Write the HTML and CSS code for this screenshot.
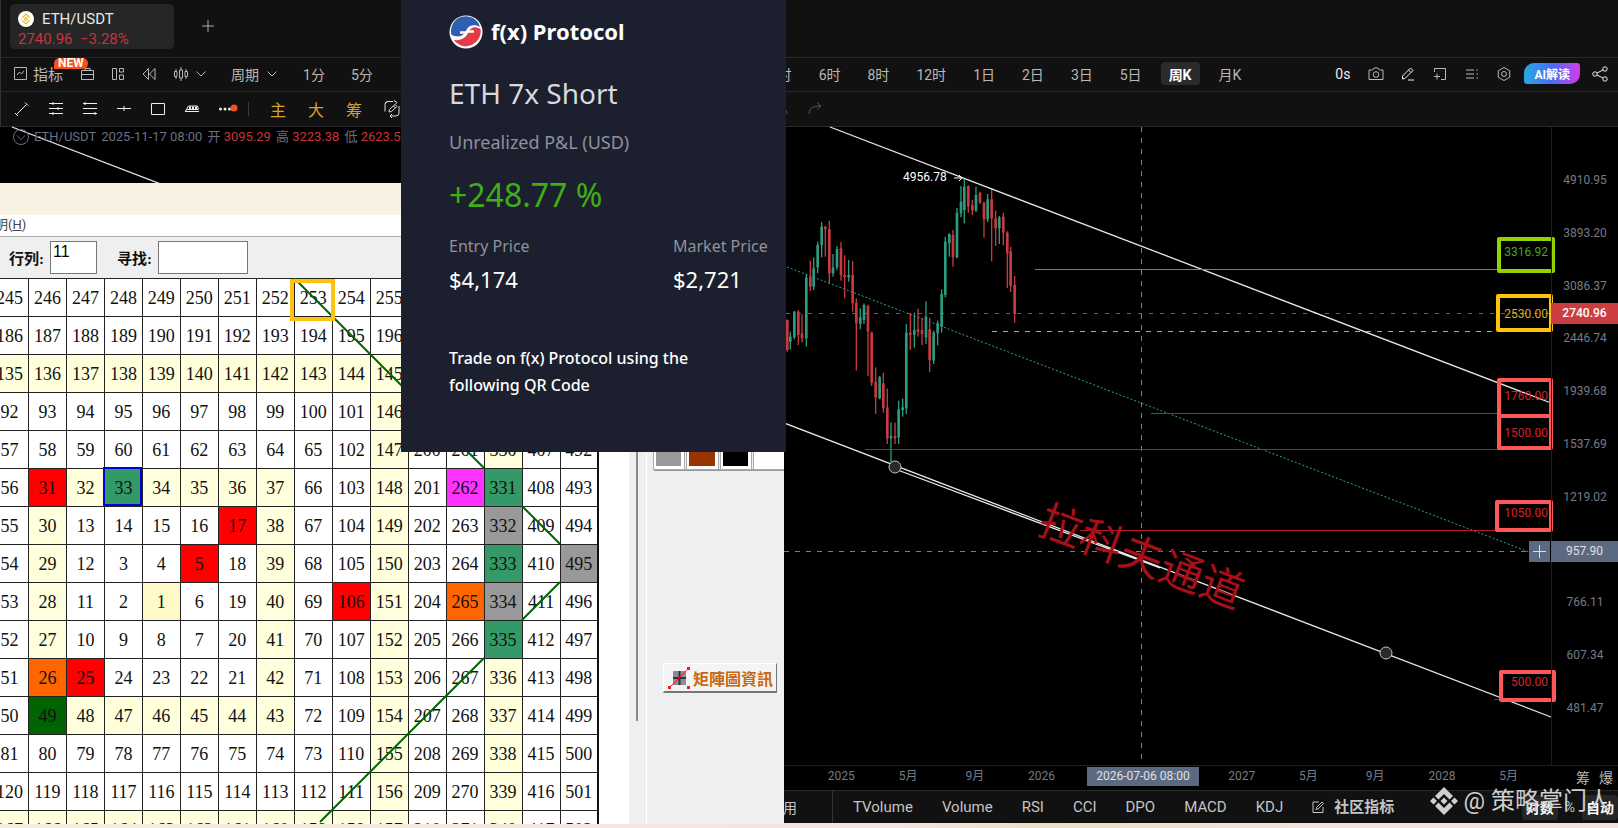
FILE: index.html
```html
<!DOCTYPE html>
<html lang="zh-CN">

<head>
    <meta charset="UTF-8">
    <meta name="viewport" content="width=device-width, initial-scale=1.0">
    <title>ETH/USDT</title>
    <link rel="stylesheet" href="styles.css">
</head>

<body>
    <!-- 行情软件 -->
    <div class="app">
        <!-- 顶部标签 -->
        <header class="tabs">
            <a class="tab" href="#">
                <span class="tab-name">
                    <svg width="16" height="16" viewBox="0 0 16 16">
                        <circle cx="8" cy="8" r="8" fill="#fff" />
                        <path d="M4.500 6.500 8 3 11.500 6.500M4.500 9.500 8 13 11.500 9.500M8 6.300 9.700 8 8 9.700 6.300 8ZM2.800 8h1M12.200 8h1" fill="none" stroke="#f3ba2f" stroke-width="1.200" />
                    </svg>
                    ETH/USDT
                </span>
                <span class="tab-price">2740.96 &nbsp;−3.28%</span>
            </a>
            <button class="tab-add" aria-label="新建">
                <svg width="12" height="12" viewBox="0 0 12 12"><path d="M6 0v12M0 6h12" stroke="#aaa" /></svg>
            </button>
        </header>

        <!-- 周期工具栏 -->
        <nav class="toolbar periods">
            <div class="tool-group">
                <button class="indicator-btn">
                    <svg width="13" height="13" viewBox="0 0 13 13"><path d="M.5.5h12v12H.5ZM3 8l2.500-3 2 2L10 4" /></svg>
                    指标
                    <span class="new-badge">NEW</span>
                </button>
                <button aria-label="模板"><svg width="13" height="13" viewBox="0 0 13 13"><path d="M.5 3.500h12v9H.5ZM4 3.500V1.500h5v2M.5 7.500h12" /></svg></button>
                <button aria-label="布局"><svg width="12" height="12" viewBox="0 0 12 12"><path d="M.5.500h4v11h-4ZM7.500.500h4v3.500h-4ZM7.500 7h4v4.500h-4Z" /></svg></button>
                <button aria-label="回放"><svg width="14" height="12" viewBox="0 0 14 12"><path d="M6.500.500v11L1 6ZM13 .500v11L7.500 6Z" /></svg></button>
                <button class="with-arrow" aria-label="K线样式">
                    <svg width="14" height="14" viewBox="0 0 14 14"><path d="M.5 4.500h2.500v5H.5ZM5.500 3H8.500v8h-3ZM11 4.500h2.500v5H11ZM2 2v2.500M2 9.500V12M7 0v3M7 11v3M12 2v2.500M12 9.500V12" /></svg>
                    <svg width="10" height="6" viewBox="0 0 10 6"><path d="m.5.500 4.500 4.500L9.500.500" /></svg>
                </button>
            </div>
            <div class="period-group">
                <button class="with-arrow">周期 <svg width="10" height="6" viewBox="0 0 10 6"><path d="m.5.500 4.500 4.500L9.500.500" /></svg></button>
                <button>1分</button>
                <button>5分</button>
            </div>
            <div class="period-group right">
                <button>4时</button>
                <button>6时</button>
                <button>8时</button>
                <button>12时</button>
                <button>1日</button>
                <button>2日</button>
                <button>3日</button>
                <button>5日</button>
                <button class="active">周K</button>
                <button>月K</button>
            </div>
            <div class="action-group">
                <button class="delay">0s</button>
                <button aria-label="截图"><svg width="16" height="16" viewBox="0 0 16 16"><path d="M1 4h3.500L6 2h4l1.500 2H15v9.500H1Z" /><circle cx="8" cy="8.500" r="2.800" /></svg></button>
                <button class="bright" aria-label="画线"><svg width="16" height="16" viewBox="0 0 16 16"><path d="M2.500 13v-3L10.500 2 13 4.500 5 12.500ZM8.500 4l2.500 2.500M8 14h6" /></svg></button>
                <button aria-label="添加"><svg width="16" height="16" viewBox="0 0 16 16"><path d="M2.500 6V2.500h11v11H9M2 10.500h6M5 7.500v6" /></svg></button>
                <button aria-label="列表"><svg width="16" height="16" viewBox="0 0 16 16"><path d="M2 4h8M2 8h8M2 12h8M12.500 4h1.500M12.500 8h1.500M12.500 12h1.500" /></svg></button>
                <button aria-label="设置"><svg width="16" height="16" viewBox="0 0 16 16"><path d="m8 1.500 5.700 3.200v6.600L8 14.500l-5.700-3.200V4.700Z" /><circle cx="8" cy="8" r="2.500" /></svg></button>
                <button class="ai-btn">AI解读</button>
                <button class="bright" aria-label="分享"><svg width="16" height="16" viewBox="0 0 16 16"><path d="m5 7 6-3M5 9l6 3" /><circle cx="3" cy="8" r="2.200" /><circle cx="13" cy="3" r="2.200" /><circle cx="13" cy="13" r="2.200" /></svg></button>
            </div>
        </nav>

        <!-- 画线工具栏 -->
        <nav class="toolbar drawing">
            <button aria-label="线段"><svg width="16" height="16" viewBox="0 0 16 16"><path d="m3 13 9.500-9.500M1 12l3 3M11 1.500l3 3" /></svg></button>
            <button aria-label="平行线"><svg width="16" height="16" viewBox="0 0 16 16"><path d="M1 2.500h14M1 7.500h14M1 12.500h14M5 1v3M10 6v3M5 11v3" /></svg></button>
            <button aria-label="通道"><svg width="16" height="16" viewBox="0 0 16 16"><path d="M1 2.500h14M1 7.500h14M1 12.500h14M3 1v3M13 11v3" /></svg></button>
            <button aria-label="水平线"><svg width="16" height="16" viewBox="0 0 16 16"><path d="M1 7.500h14M8 5v5" /></svg></button>
            <button aria-label="矩形"><svg width="16" height="16" viewBox="0 0 16 16"><path d="M1.500 2.500h13v11h-13Z" /></svg></button>
            <button aria-label="江恩"><svg width="16" height="16" viewBox="0 0 16 16"><path d="M1 10.500h14M1.500 10 4.500 5h9l1 3.500M3 8.500h11" /><path d="M5 7h8" stroke-dasharray="2 1" stroke-width="3" /></svg></button>
            <button aria-label="更多"><svg width="20" height="16" viewBox="0 0 20 16"><g fill="#eee" stroke="none"><circle cx="2.500" cy="8" r="1.500" /><circle cx="7" cy="8" r="1.500" /><circle cx="11.500" cy="8" r="1.500" /><circle cx="16" cy="7" r="3.500" fill="#f4511e" /></g></svg></button>
            <span class="divider"></span>
            <div class="gold-group">
                <button>主</button>
                <button>大</button>
                <button>筹</button>
                <button aria-label="编辑"><svg width="16" height="18" viewBox="0 0 16 18"><path d="M9 1.500H4Q1 1.500 1 4.500v7M7 16h5q3 0 3-3V6M1 4l3-3M10 .500l3 2-2 2M8 14l-2 2 2 2" /><path d="m5 12 .5-2.500L11 4.500 13 6.500 7.500 11.500ZM9.500 6l2 2" /></svg></button>
            </div>
            <div class="history">
                <button aria-label="撤销"><svg width="16" height="16" viewBox="0 0 16 16"><path d="M15 13c0-5-4-7-12-6M6 3 2 7l4 4" /></svg></button>
                <button aria-label="重做"><svg width="16" height="16" viewBox="0 0 16 16"><path d="M2 13c0-6 4-8 12-8M10 1.500 14 5l-4 3.500" /></svg></button>
            </div>
        </nav>

        <!-- 图表 -->
        <main class="chart">
            <svg class="plot" viewBox="0 127 1551 638" preserveAspectRatio="xMaxYMin meet">
                <path class="crosshair" d="M1141.500 127V765M784 551.500H1529" />
                <path class="price-line" d="M786 313.500H1551" />
                <path class="middle-line" d="M787 267 1529 552" />
                <g id="candles" transform="translate(780 180) scale(.3333)"></g>
                <path class="channel" d="M830 127 1551 403M12 127 1551 717M895 469 1160 568" />
                <path class="level green" d="M1035 269.500H1498" />
                <path class="level yellow" d="M992 331.500H1496" />
                <path class="level red" d="M1151 413.500H1498M865 449.500H1550M1080 530.500H1496M1494 699.500H1500" />
                <text class="channel-name" transform="translate(1136 571) rotate(20.800)">拉科夫通道</text>
                <circle class="anchor" cx="895" cy="467" r="6" />
                <circle class="anchor" cx="1386" cy="653" r="6" />
                <text class="peak" x="903" y="181">4956.78</text>
                <path d="M954 178h8m-3-3 3 3-3 3" fill="none" stroke="#fff" />

                <rect class="box green" x="1499" y="239" width="54" height="32" />
                <rect class="box yellow" x="1498" y="296" width="53" height="34" />
                <rect class="box red" x="1499" y="380" width="52" height="36" />
                <rect class="box red" x="1499" y="416" width="52" height="32" />
                <rect class="box red" x="1497" y="502" width="54" height="28" />
                <rect class="box red" x="1501" y="672" width="53" height="28" />
                <g class="box-text">
                    <text class="green" x="1548" y="256">3316.92</text>
                    <text class="yellow" x="1548" y="318">2530.00</text>
                    <text class="red" x="1548" y="400">1760.00</text>
                    <text class="red" x="1548" y="437">1500.00</text>
                    <text class="red" x="1548" y="517">1050.00</text>
                    <text class="red" x="1548" y="686">500.00</text>
                </g>
                <rect x="1529" y="541" width="21" height="21" fill="#5b6a80" />
                <path d="M1533 551.500h13M1539.500 545v13" stroke="#ddd" />
            </svg>

            <div class="legend">
                <svg width="16" height="16" viewBox="0 0 16 16"><circle cx="8" cy="8" r="7.500" /><path d="m4 6.500 4 4 4-4" /></svg>
                <span>ETH/USDT</span>
                <span>2025-11-17 08:00</span>
                <span>开 <b>3095.29</b></span>
                <span>高 <b>3223.38</b></span>
                <span>低 <b>2623.57</b></span>
            </div>

            <ul class="price-axis">
                <li>4910.95</li>
                <li>3893.20</li>
                <li>3086.37</li>
                <li>2446.74</li>
                <li>1939.68</li>
                <li>1537.69</li>
                <li>1219.02</li>
                <li></li>
                <li>766.11</li>
                <li>607.34</li>
                <li>481.47</li>
            </ul>
            <span class="price-tag now">2740.96</span>
            <span class="price-tag cursor">957.90</span>
        </main>

        <!-- 时间轴 -->
        <div class="time-axis">
            <div class="months">
                <span>2025</span>
                <span>5月</span>
                <span>9月</span>
                <span>2026</span>
                <span></span>
                <span></span>
                <span>2027</span>
                <span>5月</span>
                <span>9月</span>
                <span>2028</span>
                <span>5月</span>
            </div>
            <div class="axis-btns">
                <button>筹</button>
                <button>爆</button>
            </div>
            <span class="time-tag">2026-07-06 08:00</span>
        </div>

        <!-- 指标栏 -->
        <footer class="indicators">
            <button class="common">用</button>
            <div class="indicator-list">
                <button>TVolume</button>
                <button>Volume</button>
                <button>RSI</button>
                <button>CCI</button>
                <button>DPO</button>
                <button>MACD</button>
                <button>KDJ</button>
                <button class="community">
                    <svg width="12" height="12" viewBox="0 0 12 12"><path d="M7 1H1v10.500h10V6M4 8.500l.5-2L10 1l1.500 1.500L6 8Z" /></svg>
                    社区指标
                </button>
            </div>
            <div class="scale-group">
                <button class="on">对数</button>
                <button>%</button>
                <button class="on">自动</button>
            </div>
            <div class="watermark">
                <svg width="28" height="28" viewBox="0 0 28 28">
                    <path d="m14 0 9 9-3.500 3.500L14 7l-5.500 5.500L5 9ZM14 28l9-9-3.500-3.500L14 21l-5.500-5.500L5 19ZM14 10.500 17.500 14 14 17.500 10.500 14ZM3.500 10.500 7 14l-3.500 3.500L0 14ZM24.500 10.500 28 14l-3.500 3.500L21 14Z" />
                </svg>
                @ 策略掌门人
            </div>
        </footer>
        <div class="desktop-edge"></div>
    </div>

    <!-- 矩阵图窗口 -->
    <section class="matrix-window">
        <div class="matrix-title"></div>
        <div class="matrix-menu">明(<u>H</u>)</div>
        <form class="matrix-form">
            <label for="rows">行列:</label>
            <input id="rows" class="rows-input" type="text" value="11">
            <label for="find">寻找:</label>
            <input id="find" class="find-input" type="text">
        </form>
        <div class="matrix-body">
            <div class="matrix-scroll">
                <table class="matrix">
                    <tbody id="matrix-rows"></tbody>
                </table>
                <svg class="diagonals" width="609" height="545" viewBox="0 0 609 545">
                    <path d="M304 0 494 190M532 228l38 38M570 304l-38 38M494 380 330 544" stroke="#006400" stroke-width="2" />
                    <rect x="302" y="3" width="41" height="38" fill="none" stroke="#ffc20e" stroke-width="4" />
                    <rect x="114" y="190" width="37" height="37" fill="none" stroke="#0000e6" stroke-width="2" />
                </svg>
            </div>
            <div class="scroll-track"><div class="scroll-thumb"></div></div>
            <aside class="side-panel">
                <div class="swatches">
                    <span class="swatch c-gray"></span>
                    <span class="swatch c-brown"></span>
                    <span class="swatch c-black"></span>
                    <span class="swatch c-white"></span>
                </div>
                <button class="info-btn">
                    <svg width="22" height="22" viewBox="0 0 22 22">
                        <path d="M5 4h13v14H5Z" fill="#8d8d94" stroke="none" />
                        <path d="M11.500 4v14M5 11h13" stroke="#334" stroke-width="2" />
                        <path d="M1 21 21 1" stroke="#d22" />
                        <path d="M0 19h3v3H0ZM19 0h3v3h-3ZM19 19h3v3h-3Z" fill="#d22" stroke="none" />
                    </svg>
                    矩陣圖資訊
                </button>
            </aside>
        </div>
    </section>

    <!-- 收益卡片 -->
    <section class="pnl-card">
        <div class="brand">
            <svg width="34" height="34" viewBox="0 0 34 34">
                <circle cx="17" cy="17" r="16.500" fill="#fff" />
                <path d="M2.500 20A14.700 14.700 0 0 1 31 12C26 9 20 10 18 14C16 19 12 24 2.500 20Z" fill="#2f5fb3" />
                <path d="M31.500 14A14.700 14.700 0 0 1 5 25C13 26 17 22 19 18C21 13 25 10 31.500 14Z" fill="#e63946" />
                <path d="M11 17.500h6M17 16.500h8" stroke="#fff" stroke-width="2.500" />
            </svg>
            <span>f(x) Protocol</span>
        </div>
        <h1>ETH 7x Short</h1>
        <p class="pnl-label">Unrealized P&amp;L (USD)</p>
        <p class="pnl-value">+248.77 %</p>
        <dl class="prices">
            <div>
                <dt>Entry Price</dt>
                <dd>$4,174</dd>
            </div>
            <div>
                <dt>Market Price</dt>
                <dd>$2,721</dd>
            </div>
        </dl>
        <p class="invite">Trade on f(x) Protocol using the<br>following QR Code</p>
    </section>

    <script>
        // 矩阵每一行的数字
        const rows = [
            [245, 246, 247, 248, 249, 250, 251, 252, 253, 254, 255, 256, 257, 326, 403, 488],
            [186, 187, 188, 189, 190, 191, 192, 193, 194, 195, 196, 197, 258, 327, 404, 489],
            [135, 136, 137, 138, 139, 140, 141, 142, 143, 144, 145, 198, 259, 328, 405, 490],
            [92, 93, 94, 95, 96, 97, 98, 99, 100, 101, 146, 199, 260, 329, 406, 491],
            [57, 58, 59, 60, 61, 62, 63, 64, 65, 102, 147, 200, 261, 330, 407, 492],
            [56, 31, 32, 33, 34, 35, 36, 37, 66, 103, 148, 201, 262, 331, 408, 493],
            [55, 30, 13, 14, 15, 16, 17, 38, 67, 104, 149, 202, 263, 332, 409, 494],
            [54, 29, 12, 3, 4, 5, 18, 39, 68, 105, 150, 203, 264, 333, 410, 495],
            [53, 28, 11, 2, 1, 6, 19, 40, 69, 106, 151, 204, 265, 334, 411, 496],
            [52, 27, 10, 9, 8, 7, 20, 41, 70, 107, 152, 205, 266, 335, 412, 497],
            [51, 26, 25, 24, 23, 22, 21, 42, 71, 108, 153, 206, 267, 336, 413, 498],
            [50, 49, 48, 47, 46, 45, 44, 43, 72, 109, 154, 207, 268, 337, 414, 499],
            [81, 80, 79, 78, 77, 76, 75, 74, 73, 110, 155, 208, 269, 338, 415, 500],
            [120, 119, 118, 117, 116, 115, 114, 113, 112, 111, 156, 209, 270, 339, 416, 501],
            [167, 166, 165, 164, 163, 162, 161, 160, 159, 158, 157, 210, 271, 340, 417, 502]
        ];

        // 标记颜色
        const marks = {
            31: "m-red", 17: "m-red", 5: "m-red", 106: "m-red", 25: "m-red",
            33: "m-green", 331: "m-green", 333: "m-green", 335: "m-green",
            26: "m-orange", 265: "m-orange", 49: "m-dark", 262: "m-pink",
            332: "m-gray", 334: "m-gray", 495: "m-gray", 1: "m-center"
        };

        // 浅黄色的圈
        function isRing(n) {
            return (n >= 26 && n <= 49) || (n >= 135 && n <= 167) || (n >= 326 && n <= 340);
        }

        document.getElementById("matrix-rows").innerHTML = rows.map(row =>
            "<tr>" + row.map(n => {
                const cls = marks[n] || (isRing(n) ? "ring" : "");
                return `<td class="${cls}">${n}</td>`;
            }).join("") + "</tr>"
        ).join("");

        // K线: x, 最高, 最低, 实体上, 实体下, 涨跌
        const candles = [
            [22, 418, 515, 420, 510, 0], [31, 455, 508, 470, 485, 1], [43, 393, 478, 395, 472, 1],
            [55, 390, 495, 395, 465, 0], [66, 403, 488, 460, 475, 0], [79, 285, 500, 293, 475, 1],
            [91, 242, 333, 290, 320, 0], [101, 232, 330, 265, 320, 1], [113, 185, 280, 195, 262, 1],
            [125, 126, 232, 140, 195, 1], [136, 138, 230, 140, 148, 0], [148, 122, 312, 147, 280, 0],
            [159, 222, 290, 262, 280, 1], [171, 198, 270, 207, 262, 1], [183, 186, 302, 205, 285, 0],
            [194, 226, 355, 285, 292, 0], [206, 240, 305, 285, 292, 1], [218, 244, 395, 285, 370, 0],
            [229, 355, 572, 368, 430, 0], [241, 385, 448, 412, 432, 1], [252, 370, 432, 375, 420, 1],
            [264, 374, 588, 378, 455, 0], [275, 455, 618, 458, 608, 0], [287, 562, 702, 605, 652, 0],
            [299, 588, 658, 592, 655, 1], [310, 578, 698, 610, 685, 0], [322, 626, 792, 682, 775, 0],
            [333, 728, 850, 768, 775, 1], [345, 728, 792, 768, 775, 0], [356, 662, 792, 688, 772, 1],
            [368, 656, 710, 682, 690, 1], [379, 432, 702, 458, 685, 1], [391, 400, 510, 458, 465, 0],
            [403, 398, 503, 450, 465, 1], [414, 386, 470, 448, 456, 0], [426, 413, 495, 450, 462, 0],
            [438, 364, 492, 410, 472, 1], [449, 413, 576, 448, 540, 0], [461, 452, 552, 458, 542, 1],
            [473, 422, 496, 430, 460, 1], [485, 328, 458, 342, 440, 1], [496, 170, 352, 185, 345, 1],
            [508, 160, 230, 162, 190, 1], [519, 150, 260, 165, 232, 0], [531, 84, 235, 98, 232, 1],
            [543, 18, 112, 65, 100, 1], [553, -3, 130, 20, 90, 1], [565, 16, 98, 18, 80, 0],
            [577, 60, 105, 75, 92, 0], [588, 20, 96, 45, 92, 1], [600, 35, 72, 38, 68, 0],
            [612, 65, 173, 68, 118, 0], [623, 42, 126, 58, 118, 1], [635, 24, 244, 58, 115, 0],
            [647, 92, 198, 115, 145, 0], [658, 108, 192, 112, 145, 1], [670, 98, 196, 110, 158, 0],
            [682, 154, 324, 158, 220, 0], [692, 200, 336, 215, 318, 0], [704, 288, 428, 315, 402, 0]
        ];

        document.getElementById("candles").innerHTML = candles.map(([x, high, low, top, bottom, up]) =>
            `<g class="${up ? "up" : "down"}">
                <rect x="${x - 2}" y="${high}" width="4" height="${low - high}" />
                <rect x="${x - 4}" y="${top}" width="8" height="${bottom - top}" />
            </g>`
        ).join("");
    </script>
</body>

</html>
```

FILE: styles.css
```css
* {
    box-sizing: border-box;
}

body {
    margin: 0;
    height: 100vh;
    overflow: hidden;
    background-color: #000;
    color: #b8b8b8;
    font-family: Roboto, "Noto Sans CJK SC", sans-serif;
    font-size: 14px;
}

button {
    display: flex;
    align-items: center;
    padding: 0;
    border: none;
    background: none;
    color: inherit;
    font: inherit;
    white-space: nowrap;
    cursor: pointer;
}

button svg,
.legend svg {
    fill: none;
    stroke: currentColor;
}

.app {
    display: flex;
    flex-direction: column;
    height: 100vh;
}

/* 顶部标签 */
.tabs {
    display: flex;
    align-items: flex-start;
    gap: 28px;
    height: 58px;
    padding: 4px 9px;
    background-color: #111;
    border-bottom: 1px solid #2a2a2a;
    border-left: 1px solid #333;
}

.tab {
    display: flex;
    flex-direction: column;
    width: 164px;
    height: 45px;
    padding: 5px 8px;
    border-radius: 5px;
    background-color: #262626;
    color: #e6e6e6;
    font-size: 15px;
    line-height: 20px;
    text-decoration: none;
}

.tab-name {
    display: flex;
    align-items: center;
    gap: 8px;
}

.tab-price {
    color: #c9343c;
}

.tab-add {
    height: 44px;
}

/* 工具栏 */
.toolbar {
    display: flex;
    align-items: center;
    padding: 0 10px 0 13px;
    background-color: #111;
    border-bottom: 1px solid #2a2a2a;
    border-left: 1px solid #333;
}

.periods {
    height: 34px;
    padding-bottom: 2px;
}

.tool-group {
    display: flex;
    align-items: center;
    gap: 18px;
    margin-right: 25px;
}

.indicator-btn {
    position: relative;
    gap: 6px;
    font-size: 15px;
}

.new-badge {
    position: absolute;
    top: -5px;
    left: 40px;
    padding: 0 4px;
    border-radius: 6px 6px 6px 0;
    background-color: #f4511e;
    color: #fff;
    font-size: 12px;
    font-weight: bold;
    line-height: 11px;
}

.with-arrow {
    gap: 8px;
}

.period-group {
    display: flex;
    align-items: center;
    gap: 26px;
}

.period-group.right {
    gap: 27px;
    margin-left: auto;
    margin-right: 94px;
}

.period-group .active {
    height: 23px;
    margin: 0 -8px;
    padding: 0 8px;
    border-radius: 4px;
    background-color: #2b2b2b;
    color: #fff;
    font-weight: bold;
}

.action-group {
    display: flex;
    align-items: center;
    gap: 16px;
}

.delay,
.bright {
    color: #eee;
}

.delay {
    margin-right: 2px;
}

.ai-btn {
    height: 21px;
    margin: 0 -4px;
    padding: 0 10px;
    border-radius: 10px 3px 10px 3px;
    background: linear-gradient(90deg, #29a8e0, #4a6cf7 50%, #d63ae8);
    color: #fff;
    font-size: 12px;
    font-weight: bold;
}

.drawing {
    height: 35px;
    gap: 18px;
    color: #eee;
}

.divider {
    width: 1px;
    height: 14px;
    margin-left: -8px;
    background-color: #3a3a3a;
}

.gold-group {
    display: flex;
    align-items: center;
    gap: 22px;
    margin-left: 3px;
    font-size: 16px;
    color: #d9a12b;
}

.gold-group svg {
    color: #ddd;
}

.history {
    display: flex;
    gap: 19px;
    margin-left: 354px;
    color: #555;
}

/* 图表 */
.chart {
    position: relative;
    display: flex;
    flex: 1;
    min-height: 0;
    background-color: #000;
    font-size: 12px;
}

.plot {
    flex: 1;
    min-width: 0;
    height: 100%;
    overflow: visible;
    fill: none;
}

.crosshair {
    stroke: #808080;
    stroke-dasharray: 5 6;
}

.price-line {
    stroke: #a8484a;
    stroke-dasharray: 4 7;
}

.middle-line {
    stroke: #2fa58c;
    stroke-dasharray: 2 2;
}

.channel {
    stroke: #e8e8e8;
    stroke-width: 1.3;
}

.up {
    fill: #2b9c80;
}

.down {
    fill: #c93a40;
}

.level.green {
    stroke: #4aa52a;
}

.level.yellow {
    stroke: #d8ae20;
    stroke-dasharray: 5 6;
}

.level.red {
    stroke: #b81c26;
}

.channel-name {
    fill: #a80f18;
    font-family: "Noto Sans CJK SC", sans-serif;
    font-size: 43px;
    text-anchor: middle;
}

.anchor {
    fill: #2a2a2a;
    stroke: #c4c4c4;
}

.peak {
    fill: #fff;
}

.box {
    stroke-width: 4;
    stroke-linejoin: round;
}

.box.green {
    stroke: #8fd400;
}

.box.yellow {
    stroke: #ffc20e;
}

.box.red {
    stroke: #ff5858;
}

.box-text {
    text-anchor: end;
}

.box-text .green {
    fill: #4aa52a;
}

.box-text .yellow {
    fill: #d8ae20;
}

.box-text .red {
    fill: #d4222c;
}

.legend {
    position: absolute;
    top: 1px;
    left: 13px;
    display: flex;
    align-items: center;
    gap: 5px;
    color: #6a7080;
    font-size: 13px;
    line-height: 18px;
}

.legend b {
    color: #c9343c;
    font-weight: normal;
}

.price-axis {
    display: flex;
    flex-direction: column;
    justify-content: space-between;
    width: 67px;
    margin: 0;
    padding: 45px 0 49px;
    border-left: 1px solid #1e1e1e;
    color: #767b87;
    line-height: 16px;
    list-style: none;
    text-align: center;
}

.price-axis li {
    height: 16px;
}

.price-tag {
    position: absolute;
    right: 0;
    width: 67px;
    color: #fff;
    line-height: 21px;
    text-align: center;
}

.price-tag.now {
    top: 176px;
    background-color: #cc3d42;
    font-weight: 500;
}

.price-tag.cursor {
    top: 414px;
    background-color: #5b6a80;
    color: #e0e0e0;
}

/* 时间轴 */
.time-axis {
    position: relative;
    display: flex;
    align-items: center;
    height: 25px;
    padding-bottom: 2px;
    border-top: 1px solid #1e1e1e;
    color: #767b87;
    font-size: 12px;
}

.months {
    display: grid;
    grid-template-columns: repeat(11, 1fr);
    flex: 1;
    margin-left: 808px;
    line-height: 20px;
    text-align: center;
}

.months span {
    height: 22px;
}

.axis-btns {
    display: flex;
    justify-content: flex-end;
    gap: 9px;
    width: 76px;
    padding-right: 5px;
    color: #b8b8b8;
    font-size: 14px;
}

.time-tag {
    position: absolute;
    top: 1px;
    left: 1087px;
    width: 112px;
    background-color: #5b6a80;
    color: #e0e0e0;
    line-height: 19px;
    text-align: center;
}

/* 指标栏 */
.indicators {
    position: relative;
    display: flex;
    align-items: center;
    height: 33px;
    padding-left: 783px;
    background-color: #111;
    border-top: 1px solid #2a2a2a;
    color: #c4c4c4;
}

.common {
    height: 100%;
    padding-right: 35px;
    border-right: 1px solid #333;
}

.indicator-list {
    display: flex;
    align-items: center;
    gap: 29px;
    padding-left: 20px;
    font-size: 15px;
    line-height: 20px;
}

.community {
    gap: 10px;
    font-weight: bold;
}

.scale-group {
    display: flex;
    gap: 7px;
    height: 25px;
    margin-left: auto;
}

.scale-group .on {
    padding: 0 4px;
    border-radius: 3px;
    background-color: #262626;
    color: #fff;
    font-weight: bold;
}

.watermark {
    position: absolute;
    right: 7px;
    bottom: 4px;
    display: flex;
    align-items: center;
    gap: 5px;
    color: #cfcfcf;
    font-size: 24px;
    line-height: 36px;
    white-space: nowrap;
}

.watermark svg {
    fill: #cfcfcf;
}

.desktop-edge {
    height: 5px;
    background: linear-gradient(90deg, #f5eee0, #f4e3df 55%, #ecdfc0 65%, #f3e0da 80%);
}

/* 矩阵图窗口 */
.matrix-window {
    position: absolute;
    top: 183px;
    bottom: 4px;
    left: -10px;
    display: flex;
    flex-direction: column;
    width: 794px;
    overflow: hidden;
    background-color: #efefef;
    color: #111;
}

.matrix-title {
    flex: none;
    height: 32px;
    background-color: #f9f2e2;
}

.matrix-menu {
    flex: none;
    height: 22px;
    padding-left: 5px;
    background-color: #fff;
    border-bottom: 1px solid #aaa;
    color: #444;
    font-size: 13px;
    line-height: 20px;
}

.matrix-form {
    display: flex;
    flex: none;
    align-items: center;
    height: 41px;
    padding-left: 19px;
    font-family: "Liberation Serif", "Noto Sans CJK SC", serif;
    font-size: 15px;
    font-weight: bold;
}

.matrix-form input {
    height: 33px;
    margin: 0 20px 0 6px;
    padding: 0 2px 12px;
    border: 1px solid #777;
    background-color: #fff;
    font-family: "Liberation Sans", Arial, sans-serif;
    font-size: 16px;
}

.rows-input {
    width: 47px;
}

.find-input {
    width: 90px;
}

.matrix-body {
    display: flex;
    flex: 1;
    min-height: 0;
}

.matrix-scroll {
    position: relative;
    flex: 1;
    overflow: hidden;
    background-color: #fff;
}

.matrix {
    width: 609px;
    table-layout: fixed;
    border-collapse: collapse;
    border-right: 2px solid #111;
}

.matrix td {
    height: 38px;
    padding: 0;
    border: 1px solid #222;
    font-family: "Liberation Serif", "Times New Roman", serif;
    font-size: 18px;
    line-height: 20px;
    text-align: center;
}

.ring {
    background-color: #ffffdc;
}

.m-center {
    background-color: #fffac8;
}

.m-red {
    background-color: #f00;
}

.m-green {
    background-color: #396;
}

.m-orange {
    background-color: #f60;
}

.m-dark {
    background-color: #006400;
}

.m-pink {
    background-color: #f3f;
}

.m-gray {
    background-color: #999;
}

.diagonals {
    position: absolute;
    top: 0;
    left: 0;
}

.scroll-track {
    width: 18px;
    padding-left: 7px;
    border-right: 1px solid #fff;
}

.scroll-thumb {
    width: 2px;
    height: 443px;
    background-color: #8a8a8a;
}

.side-panel {
    width: 137px;
    padding: 171px 0 0 7px;
}

.swatches {
    display: flex;
    gap: 3px;
    border-bottom: 2px solid #999;
}

.swatch {
    flex: 1;
    height: 20px;
    border: solid #fff;
    border-width: 0 3px 3px 2px;
    outline: 1px solid #aaa;
}

.c-gray {
    background-color: #999;
}

.c-brown {
    background-color: #930;
}

.c-black {
    background-color: #000;
}

.c-white {
    background-color: #fff;
}

.info-btn {
    gap: 3px;
    height: 30px;
    margin: 192px 0 0 9px;
    padding: 0 3px 0 4px;
    border: 1px solid #fff;
    border-right-color: #777;
    border-bottom: 2px solid #777;
    background-color: #f4f4f4;
    color: #c56a10;
    font-family: "Noto Sans CJK TC", sans-serif;
    font-size: 16px;
    font-weight: bold;
}

/* 收益卡片 */
.pnl-card {
    position: absolute;
    top: 0;
    left: 401px;
    width: 385px;
    padding: 15px 0 53px 48px;
    background-color: #1c1f2e;
    color: #fff;
    font-family: "Noto Sans", sans-serif;
    font-size: 16px;
}

.pnl-card p {
    margin: 0;
}

.brand {
    display: flex;
    gap: 8px;
    height: 34px;
    font-size: 22px;
    font-weight: bold;
    line-height: 32px;
}

.pnl-card h1 {
    margin: 26px 0 19px;
    color: #d8dadd;
    font-size: 28px;
    font-weight: normal;
    line-height: 36px;
}

.pnl-label {
    color: #8f929a;
    font-size: 18px;
    line-height: 24px;
}

.pnl-card .pnl-value {
    margin: 21px 0 19px;
    color: #3fae16;
    font-size: 32px;
    line-height: 40px;
}

.prices {
    display: grid;
    grid-template-columns: 224px 1fr;
    margin: 0 0 52px;
}

.prices dt {
    color: #8f929a;
    line-height: 24px;
}

.prices dd {
    margin: 7px 0 0;
    font-size: 22px;
    line-height: 28px;
}

.invite {
    font-weight: 500;
    line-height: 27px;
}
```
